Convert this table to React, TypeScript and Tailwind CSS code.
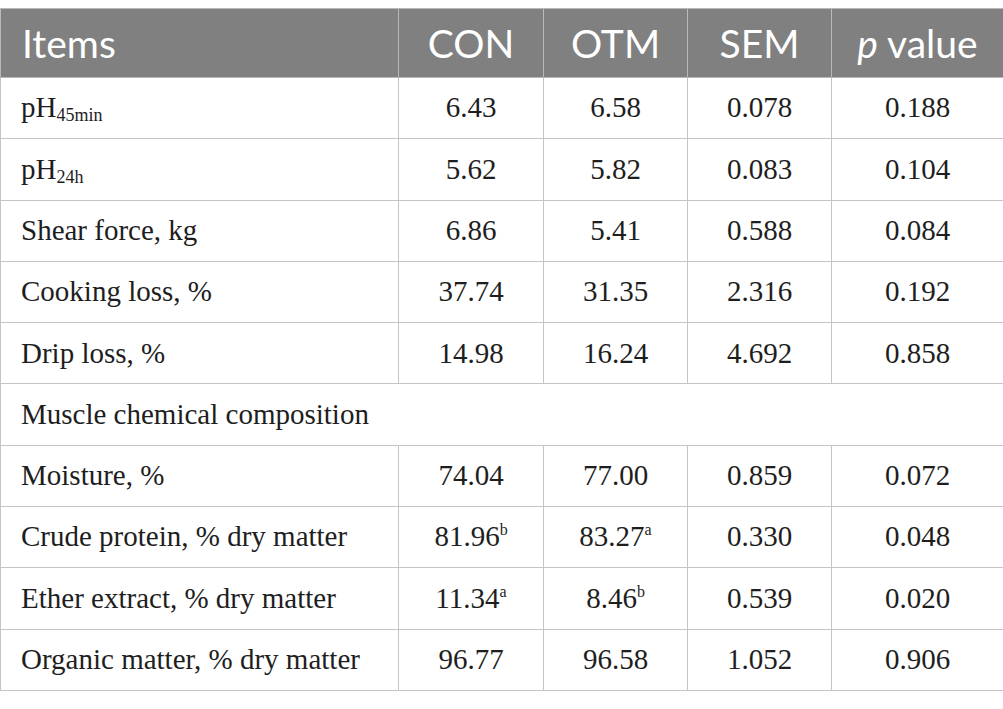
import React from 'react';

type Row = {
  label: React.ReactNode;
  values?: React.ReactNode[];
};

const sup = (v: string, s: string) => (
  <>
    {v}
    <sup className="text-[16px] -top-[11px]">{s}</sup>
  </>
);

const sub = (s: string) => <sub className="text-[18px] top-[4px]">{s}</sub>;

const rows: Row[] = [
  { label: <>pH{sub('45min')}</>, values: ['6.43', '6.58', '0.078', '0.188'] },
  { label: <>pH{sub('24h')}</>, values: ['5.62', '5.82', '0.083', '0.104'] },
  { label: 'Shear force, kg', values: ['6.86', '5.41', '0.588', '0.084'] },
  { label: 'Cooking loss, %', values: ['37.74', '31.35', '2.316', '0.192'] },
  { label: 'Drip loss, %', values: ['14.98', '16.24', '4.692', '0.858'] },
  { label: 'Muscle chemical composition' },
  { label: 'Moisture, %', values: ['74.04', '77.00', '0.859', '0.072'] },
  {
    label: 'Crude protein, % dry matter',
    values: [sup('81.96', 'b'), sup('83.27', 'a'), '0.330', '0.048'],
  },
  {
    label: 'Ether extract, % dry matter',
    values: [sup('11.34', 'a'), sup('8.46', 'b'), '0.539', '0.020'],
  },
  { label: 'Organic matter, % dry matter', values: ['96.77', '96.58', '1.052', '0.906'] },
];

export default function App() {
  return (
    <div className="w-[1003px] h-[709px] bg-white pt-[8px]">
      <table
        className="w-[1003px] border-collapse table-fixed text-[#1e1e1e]"
        style={{ fontFamily: '"Liberation Serif", "Times New Roman", serif' }}
      >
        <colgroup>
          <col className="w-[398px]" />
          <col className="w-[145px]" />
          <col className="w-[144px]" />
          <col className="w-[144px]" />
          <col className="w-[172px]" />
        </colgroup>
        <thead>
          <tr
            className="h-[69px] bg-[#7f807f] text-white text-[39px]"
            style={{ fontFamily: 'Lato, "Open Sans", sans-serif' }}
          >
            <th className="border border-[#b8b8b8] text-left font-normal pl-[21px]">Items</th>
            <th className="border border-[#b8b8b8] font-normal">CON</th>
            <th className="border border-[#b8b8b8] font-normal">OTM</th>
            <th className="border border-[#b8b8b8] font-normal">SEM</th>
            <th className="border border-[#b8b8b8] font-normal">
              <i>p</i> value
            </th>
          </tr>
        </thead>
        <tbody className="text-[29px]">
          {rows.map((r, i) => (
            <tr key={i} className="h-[61.3px]">
              {r.values ? (
                <>
                  <td className="border border-[#c4c4c4] pl-[20px] whitespace-nowrap">{r.label}</td>
                  {r.values.map((v, j) => (
                    <td key={j} className="border border-[#c4c4c4] text-center whitespace-nowrap">
                      {v}
                    </td>
                  ))}
                </>
              ) : (
                <td colSpan={5} className="border border-[#c4c4c4] pl-[20px]">
                  {r.label}
                </td>
              )}
            </tr>
          ))}
        </tbody>
      </table>
    </div>
  );
}
